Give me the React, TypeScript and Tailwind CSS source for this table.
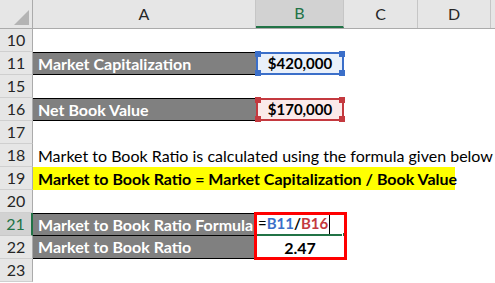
import React from 'react';

type RowProps = { n: string; active?: boolean; children?: React.ReactNode };

const Row = ({ n, active, children }: RowProps) => {
  return (
    <div className="flex h-[23px]">
      <div
        className={
          active
            ? 'w-[33px] shrink-0 flex items-center justify-center bg-[#d2d2d2] text-[#217346] border-b border-b-[#c8c8c8] border-r-2 border-r-[#217346]'
            : 'w-[33px] shrink-0 flex items-center justify-center bg-[#e6e6e6] text-[#262626] border-b border-b-[#cfcfcf] border-r border-r-[#ababab]'
        }
      >
        {n}
      </div>
      <div className="relative flex flex-1 min-w-0">{children}</div>
    </div>
  );
};

const Handles = ({ color }: { color: string }) => {
  return (
    <>
      <span className={`absolute -left-[3px] -top-[3px] w-[6px] h-[6px] ${color}`} />
      <span className={`absolute -right-[3px] -top-[3px] w-[6px] h-[6px] ${color}`} />
      <span className={`absolute -left-[3px] -bottom-[3px] w-[6px] h-[6px] ${color}`} />
      <span className={`absolute -right-[3px] -bottom-[3px] w-[6px] h-[6px] ${color}`} />
    </>
  );
};

const GrayCell = ({ text, top = true }: { text: string; top?: boolean }) => {
  return (
    <div
      className={`w-[223px] shrink-0 flex items-center pl-[5px] bg-[#808080] text-white font-bold whitespace-nowrap overflow-hidden border-b border-black ${
        top ? 'border-t' : ''
      }`}
    >
      {text}
    </div>
  );
};

const App = () => {
  return (
    <div className="relative w-[495px] h-[283px] overflow-hidden bg-white text-[16px] text-black font-[Lato,sans-serif]">
      {/* column headers */}
      <div className="flex h-[29px] bg-[#e6e6e6] text-[16px] text-[#262626] border-b border-[#ababab]">
        <div className="relative w-[33px] shrink-0 border-r border-[#ababab]">
          <svg className="absolute right-[3px] bottom-[3px]" width="15" height="15" viewBox="0 0 15 15">
            <polygon points="15,0 15,15 0,15" fill="#b4b4b4" />
          </svg>
        </div>
        <div className="w-[223px] shrink-0 flex items-center justify-center border-r border-[#c6c6c6]">A</div>
        <div className="w-[88px] shrink-0 flex items-center justify-center bg-[#d2d2d2] text-[#217346] border-r border-[#c6c6c6] border-b-2 border-b-[#217346]">
          B
        </div>
        <div className="w-[74px] shrink-0 flex items-center justify-center border-r border-[#c6c6c6]">C</div>
        <div className="w-[73px] shrink-0 flex items-center justify-center border-r border-[#c6c6c6]">D</div>
        <div className="flex-1" />
      </div>

      <Row n="10" />

      <Row n="11">
        <GrayCell text="Market Capitalization" />
        <div className="relative w-[88px] shrink-0 flex items-center justify-center bg-[#e9f0fa] border-2 border-[#3b6fc9] font-bold text-[15px]">
          $420,000
          <Handles color="bg-[#3b6fc9]" />
        </div>
      </Row>

      <Row n="15" />

      <Row n="16">
        <GrayCell text="Net Book Value" />
        <div className="relative w-[88px] shrink-0 flex items-center justify-center bg-[#fbeaea] border-2 border-[#c4393f] font-bold text-[15px]">
          $170,000
          <Handles color="bg-[#c4393f]" />
        </div>
      </Row>

      <Row n="17" />

      <Row n="18">
        <div className="flex items-center pl-[5px] whitespace-nowrap">
          Market to Book Ratio is calculated using the formula given below
        </div>
      </Row>

      <Row n="19">
        <div className="w-[422px] shrink-0 flex items-center pl-[5px] bg-[#ffff00] font-bold whitespace-nowrap">
          Market to Book Ratio = Market Capitalization / Book Value
        </div>
      </Row>

      <Row n="20" />

      <Row n="21" active>
        <GrayCell text="Market to Book Ratio Formula" />
        <div className="relative w-[88px] shrink-0 flex items-center pl-[2px] font-bold text-[15px] border-b-2 border-[#217346]">
          <span className="font-normal">=</span>
          <span className="text-[#3b6fc9]">B11</span>
          <span>/</span>
          <span className="text-[#c4393f]">B16</span>
          <span className="ml-[1px] w-px h-[20px] bg-black" />
          <span className="absolute -right-[3px] -bottom-[3px] w-[5px] h-[5px] bg-[#217346] border border-white" />
        </div>
      </Row>

      <Row n="22">
        <GrayCell text="Market to Book Ratio" top={false} />
        <div className="w-[88px] shrink-0 flex items-center justify-center font-bold">2.47</div>
      </Row>

      <Row n="23" />

      {/* red highlight box over B21:B22 */}
      <div className="absolute left-[254px] top-[212px] w-[93px] h-[48px] border-[3px] border-[#ff0000] pointer-events-none" />
    </div>
  );
};

export default App;
